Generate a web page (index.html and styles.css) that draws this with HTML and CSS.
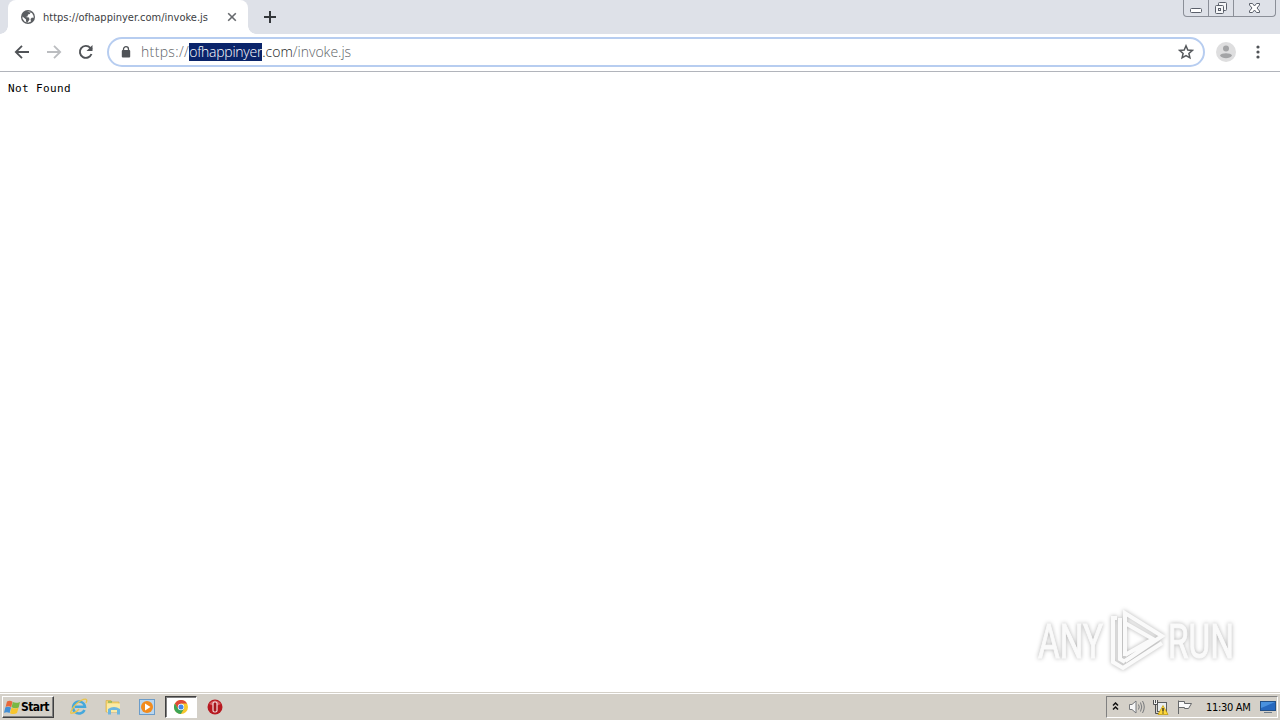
FILE: index.html
```
<!DOCTYPE html>
<html lang="en">
<head>
    <meta charset="UTF-8">
    <title>https://ofhappinyer.com/invoke.js</title>
    <link rel="stylesheet" href="styles.css">
</head>
<body>

<header class="tab-strip">
    <div class="tab">
        <svg class="globe" width="14" height="14" viewBox="0 0 14 14">
            <circle cx="7" cy="7" r="7" fill="#5a5d61"/>
            <path d="M6 1.500 9.500 1.800 9 4 7 4.500 6.500 6.500 4.500 7 8 7.500 8.500 9.500 6.500 12.500 5 11.500 5 9.500 1.500 6.500 1.500 8.500 3.500 11.500 7 12.700 10 11.500 9.500 9 11 7.500 12.500 8 12.600 6 11 3Z" fill="#fff"/>
        </svg>
        <span class="tab-title">https://ofhappinyer.com/invoke.js</span>
        <svg class="tab-close" width="10" height="10" viewBox="0 0 10 10">
            <path d="M1.200 1.200 8.800 8.800M8.800 1.200 1.200 8.800" stroke="#66696d" stroke-width="1.600"/>
        </svg>
    </div>
    <svg class="new-tab" width="12" height="12" viewBox="0 0 12 12">
        <path d="M6 0V12M0 6H12" stroke="#34373b" stroke-width="2"/>
    </svg>
    <div class="window-buttons">
        <span class="win-btn win-min">
            <svg width="14" height="16" viewBox="0 0 14 16"><rect x="1.500" y="8.500" width="11" height="4" rx="1" fill="#fff" stroke="#5b606b"/></svg>
        </span>
        <span class="win-btn win-max">
            <svg width="14" height="16" viewBox="0 0 14 16"><g fill="#f5f6f8" stroke="#5b606b"><rect x="4.500" y="2.500" width="8" height="8" rx="1"/><rect x="1.500" y="5.500" width="8" height="8" rx="1"/><rect x="4.500" y="8.500" width="2" height="2"/></g></svg>
        </span>
        <span class="win-btn win-close">
            <svg width="14" height="16" viewBox="0 0 14 16"><path d="M1.500 3.500H4.500L6.500 6 8.500 3.500H11.500V5L9 8 11.500 11V12.500H8.500L6.500 10 4.500 12.500H1.500V11L4 8 1.500 5Z" fill="#fff" stroke="#5b606b"/></svg>
        </span>
    </div>
</header>

<nav class="toolbar">
    <svg class="nav-icon" width="16" height="16" viewBox="0 0 16 16">
        <path d="M15 8H2M8 1.800 1.800 8 8 14.200" fill="none" stroke="#505357" stroke-width="1.800"/>
    </svg>
    <svg class="nav-icon" width="16" height="16" viewBox="0 0 16 16">
        <path d="M1 8H14M8 1.800 14.200 8 8 14.200" fill="none" stroke="#bbbdc0" stroke-width="1.800"/>
    </svg>
    <svg class="nav-icon" width="16" height="16" viewBox="0 0 16 16">
        <path d="M13.500 10A6 6 0 1 1 12.300 3.800L14 5.500" fill="none" stroke="#505357" stroke-width="1.900"/>
        <path d="M14.500 1V7H8.500Z" fill="#505357"/>
    </svg>
    <div class="omnibox">
        <svg class="lock" width="10" height="12" viewBox="0 0 10 12">
            <path d="M2.500 5V3.200A2.500 2.500 0 0 1 7.500 3.200V5" fill="none" stroke="#505357" stroke-width="1.300"/>
            <rect x="0.800" y="4" width="8.400" height="7.500" rx="1" fill="#505357"/>
        </svg>
        <div class="url"><span class="scheme">https://</span><span class="selected">ofhappinyer</span><span class="domain">.com</span><span class="path">/invoke.js</span></div>
        <svg class="star" width="16" height="16" viewBox="0 0 16 16">
            <path d="M8 1.800 9.800 6 14.300 6.400 10.900 9.400 11.900 13.800 8 11.500 4.100 13.800 5.100 9.400 1.700 6.400 6.200 6Z" fill="none" stroke="#55585c" stroke-width="1.500"/>
        </svg>
    </div>
    <svg class="avatar" width="20" height="20" viewBox="0 0 20 20">
        <circle cx="10" cy="10" r="10" fill="#dededf"/>
        <circle cx="10" cy="6.500" r="3" fill="#a3a4a6"/>
        <path d="M4 13.500C5 10.500 15 10.500 16 13.500 14 17 6 17 4 13.500Z" fill="#a3a4a6"/>
    </svg>
    <svg class="menu" width="4" height="14" viewBox="0 0 4 14" fill="#505357">
        <circle cx="2" cy="2" r="1.600"/><circle cx="2" cy="7" r="1.600"/><circle cx="2" cy="12" r="1.600"/>
    </svg>
</nav>

<main class="page">
    <pre>Not Found</pre>
    <div class="watermark">
        <span class="word">ANY</span>
        <svg class="mark" width="62" height="70" viewBox="0 0 62 70">
            <path d="M21 51V8L58 31 21 56M21 18 49 34 21 50M13 13H9V57L19 63 58 38M16 13V54L21 57"/>
        </svg>
        <span class="word">RUN</span>
    </div>
</main>

<footer class="taskbar">
    <div class="start">
        <svg width="17" height="15" viewBox="0 0 17 15">
            <path d="M3 1.500Q6 0 8.500 1.800L7.200 7.200Q4.500 5.500 1.600 7Z" fill="#e8683a"/>
            <path d="M8.800 2Q12 3.700 16 1.900L14.700 7.400Q11.500 9 7.600 7.200Z" fill="#79b843"/>
            <path d="M1.400 7.300Q4.300 6 7 7.600L5.600 13Q3 11.500 0 12.800Z" fill="#438fd5"/>
            <path d="M7.500 7.700Q11 9.300 14.500 7.700L13 13Q10 15 6 13.200Z" fill="#f7c52e"/>
        </svg>
        <span>Start</span>
    </div>
    <div class="launch">
        <svg width="18" height="18" viewBox="0 0 18 18">
            <path d="M14.500 12A6 6 0 1 1 15 8.800H5" fill="none" stroke="#45a8dc" stroke-width="2.500"/>
            <path d="M2 15C-2 17 4 6 11 2.500 16 0 18 1 16 5M2 15Q6 15 9 11" fill="none" stroke="#e9c44b" stroke-width="1.300"/>
        </svg>
    </div>
    <div class="launch">
        <svg width="18" height="18" viewBox="0 0 18 18">
            <path d="M2 2.500H7L8 4H15V14H2Z" fill="#f4d36d" stroke="#d9b14a" stroke-width=".7"/>
            <path d="M3 5.500H16V14H3Z" fill="#fbeaa4"/>
            <path d="M4 16.500V11Q10 7 16 11V16.500H13V12H7V16.500Z" fill="#6cb6df"/>
            <path d="M4 4H8" stroke="#58a750"/>
        </svg>
    </div>
    <div class="launch">
        <svg width="18" height="18" viewBox="0 0 18 18">
            <rect x="1.500" y="1.500" width="15" height="15" fill="#b9d6ef" stroke="#6b9cc9"/>
            <circle cx="9" cy="9" r="6" fill="#f28b1d"/>
            <path d="M7 5.500 12.500 9 7 12.500Z" fill="#fff"/>
        </svg>
    </div>
    <div class="launch active">
        <svg width="14" height="14" viewBox="0 0 14 14">
            <circle cx="7" cy="7" r="7" fill="#f7c72c"/>
            <path d="M.9 3.500A7 7 0 0 1 13.100 3.500H7L4 8.700Z" fill="#df4937"/>
            <path d="M.9 3.500A7 7 0 0 0 6.800 14L10 8.700 4 8.700Z" fill="#3da456"/>
            <circle cx="7" cy="7" r="3.200" fill="#fff"/>
            <circle cx="7" cy="7" r="2.500" fill="#4386e8"/>
        </svg>
    </div>
    <div class="launch">
        <svg width="16" height="16" viewBox="0 0 16 16">
            <circle cx="8" cy="8" r="7.500" fill="#b71920"/>
            <path d="M2 5Q8-2 14 5Q8 8 2 5" fill="#d85b60"/>
            <rect x="6" y="3" width="4" height="10" rx="1.500" fill="#a5161c" stroke="#f3dcdc" stroke-width="1.200"/>
        </svg>
    </div>
    <div class="tray">
        <svg class="chevrons" width="7" height="10" viewBox="0 0 7 10">
            <path d="M1 3.500 3.500 1 6 3.500M1 7.500 3.500 5 6 7.500" fill="none" stroke="#111" stroke-width="1.500"/>
        </svg>
        <svg class="speaker" width="17" height="16" viewBox="0 0 17 16">
            <path d="M1.500 5.500H4L8 2V14L4 10.500H1.500Z" fill="#f6f6f6" stroke="#77797c"/>
            <path d="M10.500 5.500Q12 8 10.500 10.500M12.500 3.500Q15 8 12.500 12.500M14.500 2Q18 8 14.500 14" fill="none" stroke="#77797c"/>
        </svg>
        <svg class="network" width="17" height="17" viewBox="0 0 17 17">
            <rect x="5.500" y="3.500" width="9" height="9" fill="#e9edef" stroke="#5b5e60"/>
            <path d="M1.500 1V5.500H5.500V1M3.500 1V4" fill="#f2f2f2" stroke="#4e5052"/>
            <path d="M3.500 5.500V14.500H8" fill="none" stroke="#4e5052"/>
            <path d="M11 6.500 16 15.500H6Z" fill="#ffd83a" stroke="#bd9500" stroke-width=".7"/>
            <path d="M11 9V12.500M11 13.500V14.500" stroke="#222" stroke-width="1.300"/>
        </svg>
        <svg class="flag" width="17" height="16" viewBox="0 0 17 16">
            <path d="M2.500 15V1.500M3 2.500H8.500V4.500H15.500L12.500 9.500H8.500V8.500H3" fill="#fafafa" stroke="#67696b"/>
        </svg>
        <span class="clock">11:30 AM</span>
        <svg class="desktop" width="16" height="14" viewBox="0 0 16 14">
            <rect x=".5" y="1.500" width="15" height="9" fill="#2768be" stroke="#235087"/>
            <path d="M1 2H15L6 6 1 8Z" fill="#4a91de"/>
            <path d="M4 12.500H12" stroke="#6d7b88"/>
        </svg>
    </div>
</footer>

</body>
</html>
```

FILE: styles.css
```
* {
    box-sizing: border-box;
}
body {
    margin: 0;
    width: 1280px;
    height: 720px;
    display: flex;
    flex-direction: column;
    overflow: hidden;
    background-color: #fff;
    font-family: "DejaVu Sans Condensed", "DejaVu Sans", sans-serif;
}
svg {
    display: block;
    flex: none;
}
.tab-strip {
    height: 34px;
    display: flex;
    align-items: flex-start;
    padding-left: 8px;
    background-color: #dee1e8;
}
.tab {
    position: relative;
    width: 240px;
    height: 34px;
    display: flex;
    align-items: center;
    padding-left: 13px;
    border-radius: 8px 8px 0 0;
    background-color: #fff;
}
.tab::before,
.tab::after {
    content: "";
    position: absolute;
    bottom: 0;
    width: 8px;
    height: 8px;
}
.tab::before {
    left: -8px;
    background: radial-gradient(circle at 0 0, transparent 7.5px, #fff 8px);
}
.tab::after {
    right: -8px;
    background: radial-gradient(circle at 100% 0, transparent 7.5px, #fff 8px);
}
.tab-title {
    width: 175px;
    margin-left: 8px;
    font-size: 11px;
    white-space: nowrap;
    color: #3c4043;
}
.tab-close {
    margin-left: 9px;
}
.new-tab {
    margin: 11px 0 0 16px;
}
.window-buttons {
    display: flex;
    height: 17px;
    margin: 0 4px 0 auto;
    border: 1px solid #8b8f98;
    border-top: 0;
    border-radius: 0 0 4px 4px;
}
.win-btn {
    display: flex;
    justify-content: center;
    width: 24px;
}
.win-max {
    width: 26px;
    border: solid #8b8f98;
    border-width: 0 1px;
}
.win-close {
    width: 41px;
}
.toolbar {
    height: 38px;
    display: flex;
    align-items: center;
    padding: 0 20px 2px 14px;
    border-bottom: 1px solid #b1b4bb;
    background-color: #fff;
}
.nav-icon {
    margin-right: 16px;
}
.omnibox {
    width: 1098px;
    height: 30px;
    display: flex;
    align-items: center;
    margin-left: -3px;
    padding: 0 9px 0 12px;
    border: 2px solid #b7cdf0;
    border-radius: 15px;
}
.url {
    display: flex;
    margin-left: 10px;
    font-family: "Open Sans", sans-serif;
    font-size: 14px;
    font-weight: 300;
    line-height: 18px;
    color: #606367;
}
.scheme {
    letter-spacing: 0.35px;
}
.selected {
    letter-spacing: -0.25px;
    background-color: #0a246a;
    color: #fff;
}
.domain {
    color: #202124;
}
.star {
    margin-left: auto;
}
.avatar {
    margin-left: 11px;
}
.menu {
    margin-left: auto;
}
.page {
    position: relative;
    flex: 1;
}
.page pre {
    margin: 10px 8px;
    font-family: "DejaVu Sans Mono", monospace;
    font-size: 11px;
    line-height: 13px;
    letter-spacing: 0.38px;
    color: #000;
}
.watermark {
    position: absolute;
    left: 1038px;
    top: 533px;
    display: flex;
    align-items: center;
    filter: drop-shadow(0 0 2px rgba(0, 0, 0, 0.3));
}
.word {
    width: 65px;
    padding-top: 4px;
    font-family: Roboto, sans-serif;
    font-size: 49px;
    line-height: 58px;
    white-space: nowrap;
    color: #fafafa;
    -webkit-text-stroke: 1px #fafafa;
    transform: scaleX(0.68);
    transform-origin: left;
}
.mark {
    margin-left: 1px;
    margin-right: 2px;
}
.mark path {
    fill: none;
    stroke: #fafafa;
    stroke-width: 4;
}
.taskbar {
    height: 28px;
    display: flex;
    align-items: center;
    padding: 1px 2px 0;
    border-top: 1px solid #d4d0c8;
    background-color: #d4d0c8;
    box-shadow: inset 0 1px #fff;
}
.start {
    width: 52px;
    height: 22px;
    display: flex;
    align-items: center;
    margin-right: 9px;
    padding-left: 1px;
    border: 1px solid;
    border-color: #fff #404040 #404040 #fff;
    box-shadow: inset -1px -1px #808080;
    font-size: 12px;
    font-weight: bold;
    letter-spacing: -0.6px;
}
.launch {
    width: 32px;
    height: 22px;
    display: flex;
    align-items: center;
    justify-content: center;
    margin-right: 2px;
}
.active {
    border: 1px solid;
    border-color: #404040 #fff #fff #404040;
    box-shadow: inset 1px 1px #808080;
    background-color: #fff;
}
.tray {
    width: 172px;
    height: 22px;
    display: flex;
    align-items: center;
    margin-left: auto;
    padding-left: 5px;
    border: 1px solid;
    border-color: #808080 #fff #fff #808080;
}
.speaker {
    margin-left: 9px;
}
.network {
    margin-left: 7px;
}
.flag {
    margin-left: 7px;
}
.clock {
    width: 47px;
    margin-left: 13px;
    font-size: 11px;
    letter-spacing: -0.3px;
    white-space: nowrap;
}
.desktop {
    margin-left: 7px;
}
```
